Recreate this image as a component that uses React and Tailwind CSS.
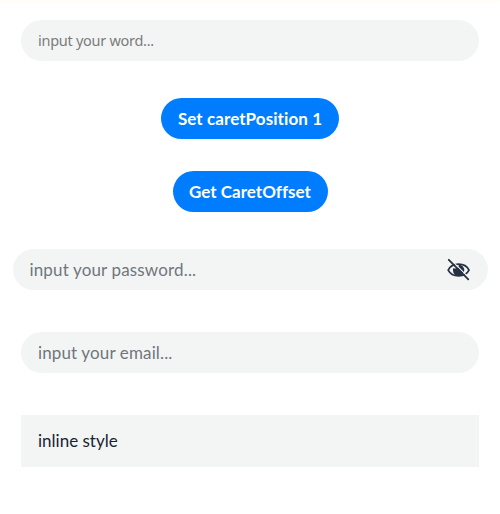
function EyeOff() {
  return (
    <svg width="24" height="24" viewBox="0 0 24 24" fill="none" className="shrink-0">
      <path d="M1.2 12.2C5 4.2 18.2 4.2 22 12.2C18.2 19.8 5 19.8 1.2 12.2Z" stroke="#273142" strokeWidth="1.7" />
      <path d="M6.3 10Q8.4 11 10.1 10.1Q12 9 11.7 6.5A5.7 5.7 0 1 1 6.3 10Z" fill="#273142" />
      <path d="M3 0.9L22.3 20.2" stroke="#f3f5f5" strokeWidth="1.1" />
      <path d="M1.8 1.8L21.3 21.3" stroke="#273142" strokeWidth="1.8" strokeLinecap="round" />
    </svg>
  );
}

function Field({ className, children }) {
  return (
    <div className={`flex items-center bg-[#f3f5f5] pl-[17px] whitespace-nowrap ${className}`}>
      {children}
    </div>
  );
}

export default function App() {
  return (
    <main className="flex h-[514px] w-[500px] flex-col items-center overflow-hidden bg-white font-['Lato',sans-serif] text-[17px] text-[#70767c]">
      <div className="h-[3px] w-full shrink-0 bg-gradient-to-b from-[#fffdf3] to-white" />
      <Field className="mt-[17px] h-[41px] w-[458px] shrink-0 rounded-full pt-px font-['Noto_Sans',sans-serif] text-[14.5px] tracking-[-0.28px] text-[#7b7c7c]">
        <span>input your word...</span>
      </Field>
      <button className="mt-[37px] h-[41px] w-[178px] shrink-0 rounded-full bg-[#007dff] font-['Lato',sans-serif] text-[17px] font-bold tracking-[0.08px] whitespace-nowrap text-white">
        Set caretPosition 1
      </button>
      <button className="mt-8 h-[41px] w-[155px] shrink-0 rounded-full bg-[#007dff] font-['Lato',sans-serif] text-[17px] font-bold tracking-[0.02px] whitespace-nowrap text-white">
        Get CaretOffset
      </button>
      <Field className="mt-[37px] h-[41px] w-[475px] shrink-0 justify-between rounded-full pr-[16.5px] tracking-[0.15px]">
        <span>input your password...</span>
        <EyeOff />
      </Field>
      <Field className="mt-[42px] h-[41px] w-[458px] shrink-0 rounded-full tracking-[0.13px]">
        <span>input your email...</span>
      </Field>
      <Field className="mt-[42px] h-[52px] w-[458px] shrink-0 text-[#182431]">
        <span>inline style</span>
      </Field>
    </main>
  );
}
